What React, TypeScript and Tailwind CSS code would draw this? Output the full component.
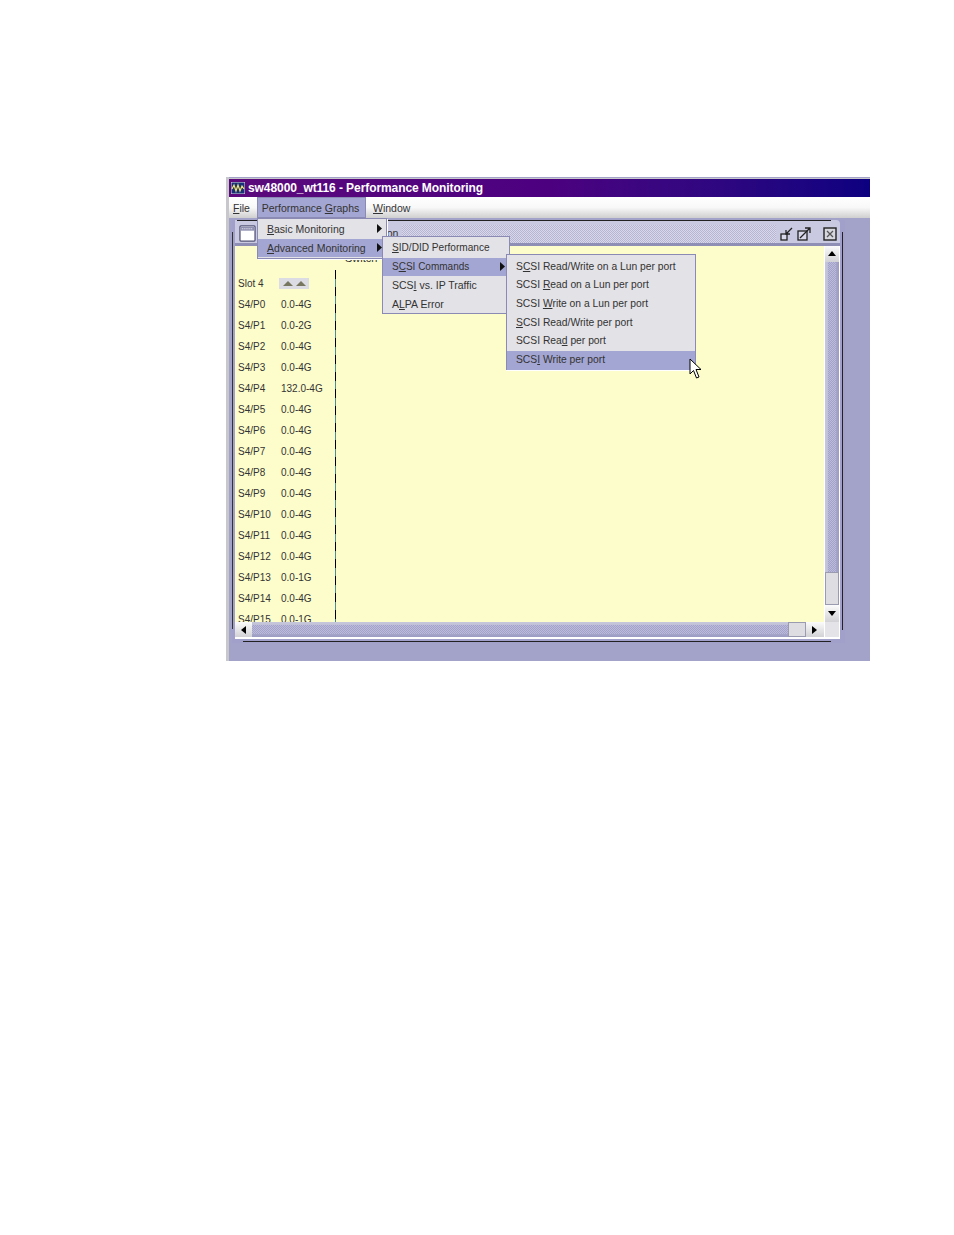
import type { ReactNode } from "react";

const ports = [
  ["S4/P0", "0.0-4G"],
  ["S4/P1", "0.0-2G"],
  ["S4/P2", "0.0-4G"],
  ["S4/P3", "0.0-4G"],
  ["S4/P4", "132.0-4G"],
  ["S4/P5", "0.0-4G"],
  ["S4/P6", "0.0-4G"],
  ["S4/P7", "0.0-4G"],
  ["S4/P8", "0.0-4G"],
  ["S4/P9", "0.0-4G"],
  ["S4/P10", "0.0-4G"],
  ["S4/P11", "0.0-4G"],
  ["S4/P12", "0.0-4G"],
  ["S4/P13", "0.0-1G"],
  ["S4/P14", "0.0-4G"],
  ["S4/P15", "0.0-1G"],
];

const U = ({ children }: { children: ReactNode }) => <span className="underline underline-offset-[1px]">{children}</span>;

const Arrow = () => (
  <svg width="5" height="9" viewBox="0 0 5 9" className="absolute right-[4px] top-[4px]">
    <path d="M0 0L5 4.5L0 9Z" fill="#111" />
  </svg>
);

const MenuItem = ({ active, arrow, size = "text-[10.5px]", children }: { active?: boolean; arrow?: boolean; size?: string; children: ReactNode }) => (
  <div className={`relative h-[18.7px] leading-[18.7px] whitespace-nowrap pl-[9px] text-[#333] ${size} ${active ? "bg-[#a3a6d2]" : ""}`}>
    {children}
    {arrow && <Arrow />}
  </div>
);

const ScrollBtn = ({ dir }: { dir: "up" | "down" | "left" | "right" }) => {
  const pts = { up: "1,7 9,7 5,2", down: "1,2 9,2 5,7", left: "7,1 7,9 2,5", right: "2,1 2,9 7,5" }[dir];
  return (
    <div className="flex items-center justify-center w-full h-full bg-gradient-to-b from-[#fbfbfb] to-[#d2d2d6]">
      <svg width="10" height="10" viewBox="0 0 10 10">
        <polygon points={pts} fill="#000" />
      </svg>
    </div>
  );
};

const trackDots = "bg-[conic-gradient(#a2a2cc_25%,#bcbcd8_0_50%,#a2a2cc_0_75%,#bcbcd8_0)] bg-[length:2px_2px]";

export default function App() {
  return (
    <div className="w-[954px] h-[1235px] bg-white pt-[177px] pl-[226px] font-['Liberation_Sans',Arial,sans-serif]">
      <div className="relative w-[644px] h-[484px] flex flex-col bg-[#a3a3c9] border-l-[3px] border-[#c8c8cc] overflow-hidden">
        {/* title bar */}
        <div className="h-[19px] mt-[1px] flex items-center gap-[3px] pl-[2px] bg-gradient-to-r from-[#5c0a7c] via-[#4c0080] to-[#0c0080] border-t border-[#c8c8cc]">
          <svg width="14" height="12" viewBox="0 0 14 12">
            <rect width="14" height="12" fill="#17307a" stroke="#ddd" />
            <path d="M1 7L3 3L5 9L7 3L9 9L11 4L13 7" fill="none" stroke="#f2e36a" strokeWidth="1.2" />
          </svg>
          <span className="font-bold text-[12px] text-white tracking-[-0.08px]">sw48000_wt116 - Performance Monitoring</span>
        </div>
        {/* menu bar */}
        <div className="h-[21px] flex items-stretch pl-[1px] text-[10.5px] text-[#333] bg-gradient-to-b from-white via-[#f8f8f8] to-[#cfcfcf]">
          <div className="w-[27px] flex items-center pl-[3px] pt-[2px]"><span><U>F</U>ile</span></div>
          <div className="w-[109px] flex items-center justify-center pr-[2px] pt-[2px] bg-[#a3a6d2] border border-[#8a8ab4]"><span>Performance <U>G</U>raphs</span></div>
          <div className="ml-[7px] flex items-center pt-[2px]"><span><U>W</U>indow</span></div>
        </div>
        {/* internal frame */}
        <div className="relative mt-[2px] ml-[3px] w-[613px] h-[423px] flex flex-col bg-[#a0a0cb] pl-[3px] pr-[5px] pb-[4px]">
          <div className="absolute left-[5px] top-0 w-[594px] h-px bg-[#222]" />
          <div className="absolute left-0 top-[12px] w-px h-[397px] bg-[#333]" />
          <div className="absolute left-[610px] top-[12px] w-px h-[398px] bg-[#222]" />
          <div className="absolute left-[11px] top-[421px] w-[588px] h-px bg-[#222]" />
          <div className="h-[5px] shrink-0 bg-[#c9c9e1] rounded-tr-[4px]" />
          <div className="h-[18px] shrink-0 flex items-center bg-[#c9c9e1] overflow-hidden">
            <div className="w-[22px] h-[18px] pl-[4px] shrink-0">
              <svg width="17" height="17" viewBox="0 0 18 18">
                <rect x="1" y="1" width="16" height="16" rx="1" fill="#fff" stroke="#55557a" strokeWidth="1.4" />
                <rect x="2" y="2" width="14" height="4" fill="#8e8eb0" />
                <path d="M3 4H15" stroke="#fff" strokeDasharray="1 1" />
              </svg>
            </div>
            <span className="ml-[76px] shrink-0 text-[10.5px] text-[#333] whitespace-nowrap">Port Selection</span>
            <div className="ml-[4px] w-[374px] h-full shrink-0 bg-[conic-gradient(#b6b6d4_25%,#d8d8ea_0_50%,#b6b6d4_0_75%,#d8d8ea_0)] bg-[length:2px_2px]" />
            <div className="ml-[4px] flex items-center gap-[3px] shrink-0">
              <svg width="14" height="14" viewBox="0 0 14 14">
                <rect x="1" y="7" width="6" height="6" fill="#d8d8ea" stroke="#222" strokeWidth="1.3" />
                <path d="M12 1L6 7M6 3V7H10" fill="none" stroke="#222" strokeWidth="1.3" />
              </svg>
              <svg width="14" height="14" viewBox="0 0 14 14">
                <rect x="1" y="4" width="9" height="9" fill="#d8d8ea" stroke="#222" strokeWidth="1.3" />
                <path d="M3 11L13 1M8 1H13V6" fill="none" stroke="#222" strokeWidth="1.3" />
              </svg>
              <svg width="14" height="14" viewBox="0 0 14 14" className="ml-[9px]">
                <rect x="1" y="1" width="12" height="12" fill="#d6d6de" stroke="#222" strokeWidth="1.4" />
                <path d="M4 4L10 10M10 4L4 10" stroke="#555" strokeWidth="1.3" />
              </svg>
            </div>
          </div>
          <div className="h-[3px] shrink-0 bg-[#8f8fb6]" />
          <div className="flex-1 flex min-h-0 bg-white pr-px pb-[2px]">
            <div className="flex-1 flex flex-col min-w-0">
              <div className="flex-1 min-h-0 flex bg-[#fdfdcb] overflow-hidden text-[#333] text-[10px] border-r border-white">
                <div className="w-[100px] shrink-0 pt-[27px] pl-[3px]">
                  <div className="h-[21px] flex items-center">
                    <span className="w-[41px]">Slot 4</span>
                    <div className="w-[30px] h-[11px] -mt-[1px] bg-[#dcdce4] flex items-center justify-center gap-[1px]">
                      <svg width="12" height="7" viewBox="0 0 12 7"><polygon points="1,6 6,1 11,6" fill="#777760" /></svg>
                      <svg width="12" height="7" viewBox="0 0 12 7"><polygon points="1,6 6,1 11,6" fill="#777760" /></svg>
                    </div>
                  </div>
                  {ports.map(([name, speed]) => (
                    <div key={name} className="h-[21px] flex items-center">
                      <span className="w-[43px]">{name}</span>
                      <span>{speed}</span>
                    </div>
                  ))}
                </div>
                <div className="w-px mt-[24px] bg-[repeating-linear-gradient(to_bottom,#000_0,#000_9px,#4d8f8f_9px,#4d8f8f_17px)]" />
                <div className="pl-[9px] pt-[4px] text-[11px] h-fit">Switch</div>
              </div>
              <div className="h-[15px] shrink-0 flex">
                <div className="w-[17px]"><ScrollBtn dir="left" /></div>
                <div className="w-[536px] py-[3px] bg-gradient-to-b from-[#c8c8dc] to-[#9c9cc4]">
                  <div className={`h-full ${trackDots}`} />
                </div>
                <div className="w-[18px] bg-[#dedee2] border border-[#9a9ab0]" />
                <div className="flex-1 border-r border-white"><ScrollBtn dir="right" /></div>
              </div>
            </div>
            <div className="w-[14px] shrink-0 flex flex-col">
              <div className="h-[16px]"><ScrollBtn dir="up" /></div>
              <div className="h-[310px] px-[3px] bg-gradient-to-r from-[#c8c8dc] to-[#9c9cc4]">
                <div className={`h-full ${trackDots}`} />
              </div>
              <div className="h-[33px] bg-[#dedee2] border border-[#9a9ab0]" />
              <div className="h-[17px]"><ScrollBtn dir="down" /></div>
              <div className="flex-1 bg-[#e4e4e8]" />
            </div>
          </div>
        </div>

        {/* menus */}
        <div className="absolute left-[28px] top-[41px] w-[130px] h-[41px] py-px bg-[#e3e2e6] border border-[#8a8ab4] shadow-[1px_1px_0_#fff]">
          <MenuItem arrow><U>B</U>asic Monitoring</MenuItem>
          <MenuItem active arrow><U>A</U>dvanced Monitoring</MenuItem>
        </div>
        <div className="absolute left-[153px] top-[59px] w-[128px] h-[78px] pt-[2px] bg-[#e3e2e6] border border-[#8a8ab4]">
          <MenuItem size="text-[10.1px]"><U>S</U>ID/DID Performance</MenuItem>
          <MenuItem active arrow size="text-[10px]">S<U>C</U>SI Commands</MenuItem>
          <MenuItem><span>SCS<U>I</U> vs. IP Traffic</span></MenuItem>
          <MenuItem>A<U>L</U>PA Error</MenuItem>
        </div>
        <div className="absolute left-[277px] top-[77px] w-[190px] h-[116px] pt-[2.7px] bg-[#e3e2e6] border border-[#8a8ab4] shadow-[0_1px_0_#fff]">
          <MenuItem size="text-[10.3px]">S<U>C</U>SI Read/Write on a Lun per port</MenuItem>
          <MenuItem size="text-[10.3px]">SCSI <U>R</U>ead on a Lun per port</MenuItem>
          <MenuItem size="text-[10.3px]">SCSI <U>W</U>rite on a Lun per port</MenuItem>
          <MenuItem size="text-[10.3px]"><U>S</U>CSI Read/Write per port</MenuItem>
          <MenuItem size="text-[10.3px]">SCSI Rea<U>d</U> per port</MenuItem>
          <MenuItem active size="text-[10.3px]">SCS<U>I</U> Write per port</MenuItem>
        </div>
        {/* mouse cursor */}
        <svg width="13" height="22" viewBox="0 0 13 22" className="absolute left-[460px] top-[181px]">
          <path d="M1 1V16L4.5 12.5L7.5 20L10 19L7 11.5H12Z" fill="#fff" stroke="#000" />
        </svg>
      </div>
    </div>
  );
}
